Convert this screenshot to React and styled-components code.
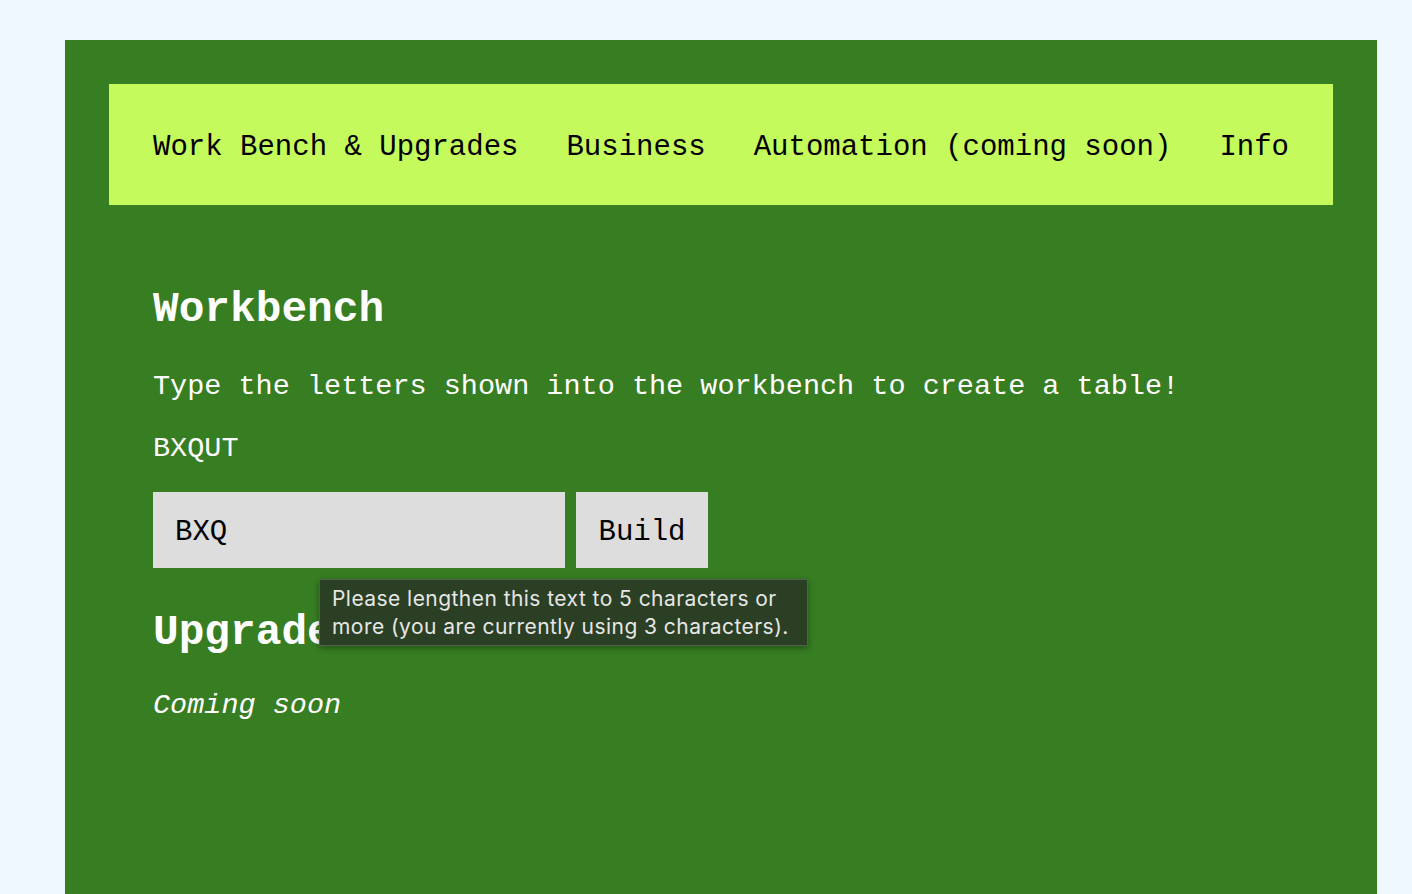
import React, { useState } from "react";
import styled, { createGlobalStyle } from "styled-components";

const GlobalStyle = createGlobalStyle`
	html, body {
		margin: 0;
		padding: 0;
		background: #f0f8ff;
		height: 100%;
		overflow: hidden;
	}
	body {
		font-family: "Liberation Mono", "Courier New", monospace;
	}
`;

const Page = styled.div`
	padding: 40px 35px 0 65px;
	height: 100vh;
	box-sizing: border-box;
`;

const Panel = styled.main`
	background: #377d22;
	height: 100%;
	padding: 44px;
	box-sizing: border-box;
`;

const Nav = styled.nav`
	background: #c4fa5c;
	height: 121px;
	box-sizing: border-box;
	padding: 6px 44px 0;
	display: flex;
	align-items: center;
	justify-content: space-between;
`;

const NavLink = styled.a`
	color: #000;
	font-size: 29px;
	line-height: 34px;
	text-decoration: none;
	white-space: nowrap;
	cursor: pointer;
`;

const Content = styled.section`
	padding: 80px 44px 0;
	color: #fff;
`;

const Heading = styled.h2`
	margin: 0;
	font-size: 42.8px;
	line-height: 50px;
	font-weight: bold;
`;

const Text = styled.p`
	margin: ${(p) => p.$top || 0}px 0 0;
	font-size: 28.5px;
	line-height: 34px;
	font-style: ${(p) => (p.$italic ? "italic" : "normal")};
`;

const Form = styled.form`
	position: relative;
	display: flex;
	gap: 11px;
	margin-top: 26px;
	margin-bottom: 40px;
`;

const Input = styled.input`
	width: 412px;
	height: 76px;
	box-sizing: border-box;
	border: none;
	outline: none;
	background: #dddddd;
	padding: 4px 22px 0;
	font-family: "Liberation Mono", "Courier New", monospace;
	font-size: 29px;
	color: #000;
`;

const Button = styled.button`
	width: 132px;
	height: 76px;
	border: none;
	background: #dddddd;
	font-family: "Liberation Mono", "Courier New", monospace;
	font-size: 29px;
	color: #000;
	padding: 4px 0 0;
	cursor: pointer;
`;

const Tooltip = styled.div`
	position: absolute;
	left: 166px;
	top: 87px;
	width: 489px;
	height: 67px;
	box-sizing: border-box;
	padding: 5px 10px 5px 12px;
	background: #2a3f24;
	border: 1px solid #56604f;
	box-shadow: 0 2px 6px rgba(0, 0, 0, 0.35);
	color: #e6e6e6;
	font-family: Inter, "Noto Sans", sans-serif;
	font-size: 21px;
	line-height: 28px;
	letter-spacing: 0.45px;
	z-index: 2;
`;

const navItems = [
	"Work Bench & Upgrades",
	"Business",
	"Automation (coming soon)",
	"Info",
];

const App = () => {
	const [value, setValue] = useState("BXQ");

	return (
		<>
			<GlobalStyle />
			<Page>
				<Panel>
					<Nav>
						{navItems.map((item) => (
							<NavLink key={item}>{item}</NavLink>
						))}
					</Nav>
					<Content>
						<Heading>Workbench</Heading>
						<Text $top={35}>
							Type the letters shown into the workbench to create a table!
						</Text>
						<Text $top={28}>BXQUT</Text>
						<Form onSubmit={(e) => e.preventDefault()}>
							<Input
								value={value}
								onChange={(e) => setValue(e.target.value)}
							/>
							<Button type="submit">Build</Button>
							{/* browser validation bubble */}
							<Tooltip>
								Please lengthen this text to 5 characters or more (you are
								currently using 3 characters).
							</Tooltip>
						</Form>
						<Heading>Upgrades</Heading>
						<Text $top={31} $italic>
							Coming soon
						</Text>
					</Content>
				</Panel>
			</Page>
		</>
	);
};

export default App;
